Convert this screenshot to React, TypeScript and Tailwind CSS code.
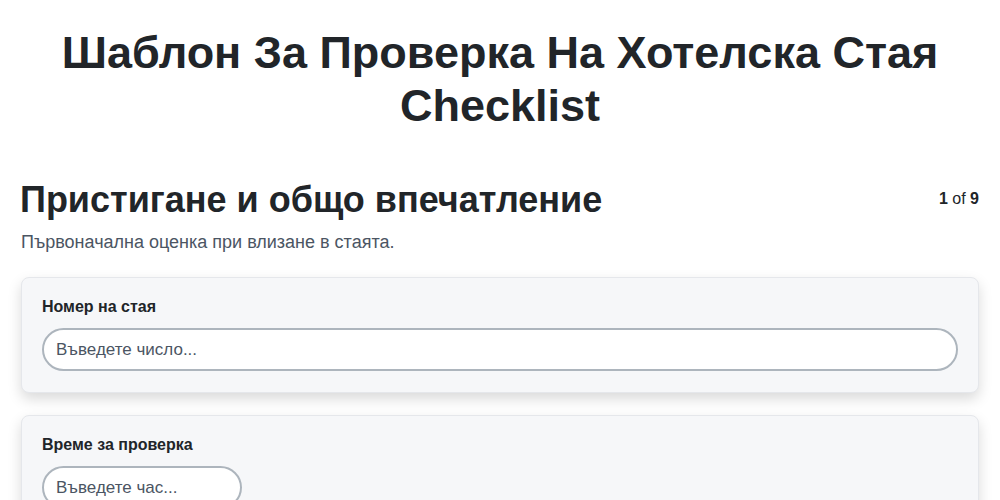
import React from "react";

export default function App() {
  return (
    <div className="min-h-screen bg-white px-[21px] text-[#212529]" style={{ fontFamily: '"Liberation Sans", Arial, sans-serif' }}>
      <h1 className="pt-[26px] text-center text-[45px] font-bold leading-[53px] text-[#212529]">
        Шаблон За Проверка На Хотелска Стая Checklist
      </h1>
      <div className="mt-[46px] flex items-start justify-between">
        <h2 className="-ml-[1px] text-[36px] font-bold leading-[43px]">Пристигане и общо впечатление</h2>
        <div className="mt-[11px] text-[16px] leading-[19px]">
          <span className="font-bold">1</span> of <span className="font-bold">9</span>
        </div>
      </div>
      <p className="mt-[8px] text-[18px] leading-[27px] text-[#4b5563]">Първоначална оценка при влизане в стаята.</p>
      <div className="mt-[21px] flex flex-col gap-[22px]">
        <div className="rounded-lg border border-[#e5e7eb] bg-[#f6f7f9] px-5 pb-[21px] pt-[19px] shadow-[0_6px_14px_rgba(0,0,0,0.15)]">
          <div className="text-[16px] font-bold leading-[19px]">Номер на стая</div>
          <input
            className="mt-[12px] h-[43px] w-full rounded-full border-2 border-[#adb5bd] bg-white px-[12px] text-[17px] text-[#212529] placeholder:text-[#4b5563] outline-none"
            placeholder="Въведете число..."
          />
        </div>
        <div className="rounded-lg border border-[#e5e7eb] bg-[#f6f7f9] px-5 pb-[21px] pt-[19px] shadow-[0_6px_14px_rgba(0,0,0,0.15)]">
          <div className="text-[16px] font-bold leading-[19px]">Време за проверка</div>
          <input
            className="mt-[12px] h-[43px] w-[200px] rounded-full border-2 border-[#adb5bd] bg-white px-[12px] text-[17px] text-[#212529] placeholder:text-[#4b5563] outline-none"
            placeholder="Въведете час..."
          />
        </div>
      </div>
    </div>
  );
}
